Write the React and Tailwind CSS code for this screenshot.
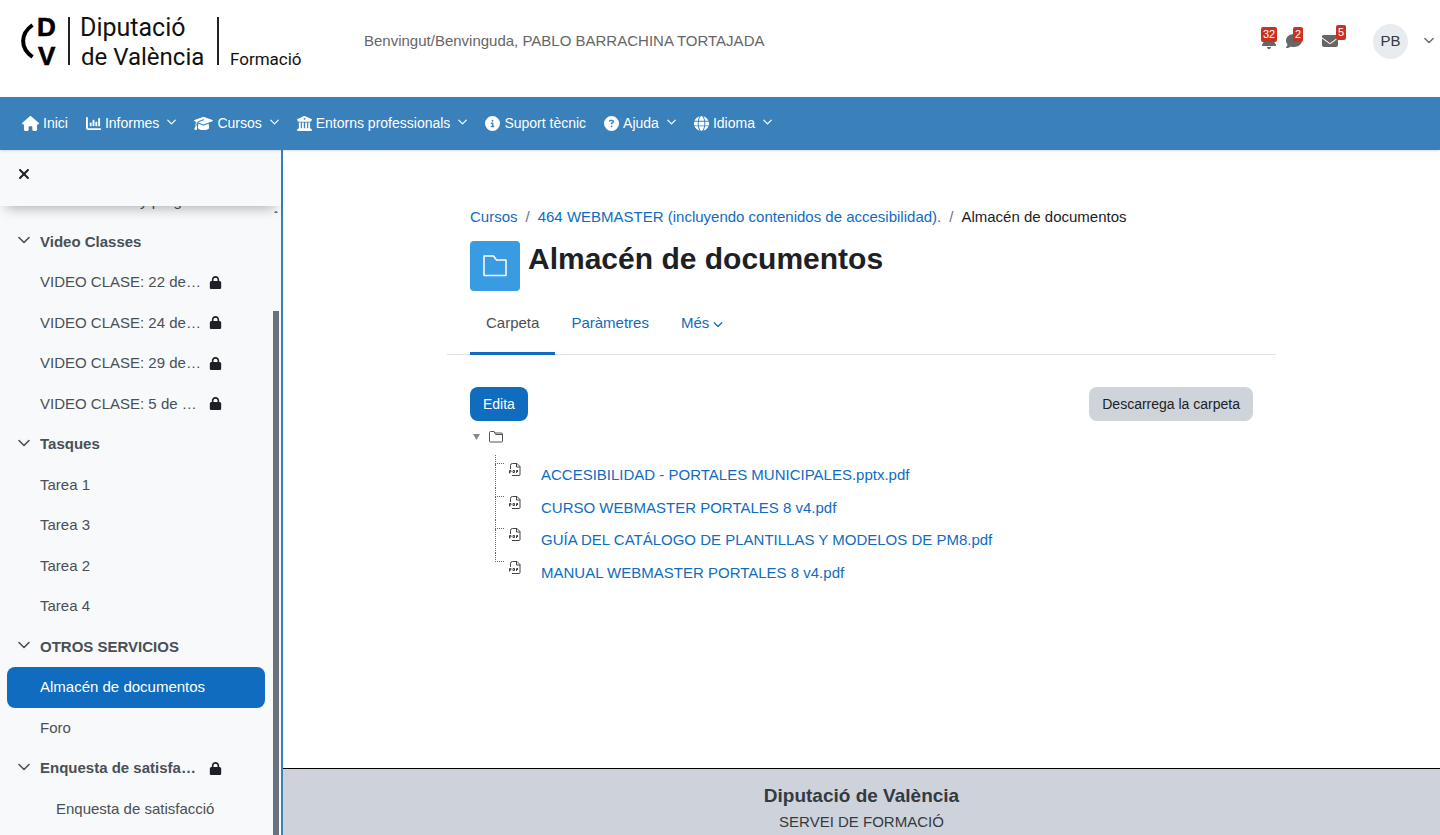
import {
  FaBell,
  FaBuildingColumns,
  FaChartColumn,
  FaChevronDown,
  FaCircleInfo,
  FaCircleQuestion,
  FaComment,
  FaEnvelope,
  FaGlobe,
  FaGraduationCap,
  FaHouse,
  FaLock,
  FaXmark,
} from "react-icons/fa6";

const navItems = [
  { label: "Inici", icon: FaHouse, size: "w-[17px]" },
  { label: "Informes", icon: FaChartColumn, size: "w-[15px]", menu: true },
  { label: "Cursos", icon: FaGraduationCap, size: "w-[19px]", menu: true },
  { label: "Entorns professionals", icon: FaBuildingColumns, size: "w-[15px]", menu: true },
  { label: "Suport tècnic", icon: FaCircleInfo, size: "w-[15px]" },
  { label: "Ajuda", icon: FaCircleQuestion, size: "w-[15px]", menu: true },
  { label: "Idioma", icon: FaGlobe, size: "w-[15px]", menu: true },
];

const courseIndex = [
  { label: "Guía didáctica y programación" },
  { label: "Video Classes", section: true },
  { label: "VIDEO CLASE: 22 de abril", locked: true },
  { label: "VIDEO CLASE: 24 de abril", locked: true },
  { label: "VIDEO CLASE: 29 de abril", locked: true },
  { label: "VIDEO CLASE: 5 de mayo", locked: true },
  { label: "Tasques", section: true },
  { label: "Tarea 1" },
  { label: "Tarea 3" },
  { label: "Tarea 2" },
  { label: "Tarea 4" },
  { label: "OTROS SERVICIOS", section: true },
  { label: "Almacén de documentos", active: true },
  { label: "Foro" },
  { label: "Enquesta de satisfacció", section: true, locked: true },
  { label: "Enquesta de satisfacció", indent: true },
];

const files = [
  "ACCESIBILIDAD - PORTALES MUNICIPALES.pptx.pdf",
  "CURSO WEBMASTER PORTALES 8 v4.pdf",
  "GUÍA DEL CATÁLOGO DE PLANTILLAS Y MODELOS DE PM8.pdf",
  "MANUAL WEBMASTER PORTALES 8 v4.pdf",
];

const Chevron = ({ className }) => (
  <svg viewBox="0 0 12 8" fill="none" stroke="currentColor" strokeWidth="1.6" className={className}>
    <path d="M1 1.500 6 6.500l5-5" strokeLinecap="round" strokeLinejoin="round" />
  </svg>
);

const Logo = () => (
  <svg width="290" height="60" viewBox="0 0 290 60" className="overflow-visible" role="img" aria-label="Diputació de València Formació">
    <path d="M12.500 13C0 22 0 36 12.500 45" fill="none" stroke="#000" strokeWidth="4" />
    <g fontFamily="'Liberation Sans', Arial, sans-serif" fontSize="26" fontWeight="700" stroke="#000" strokeWidth=".6">
      <text x="17" y="24">D</text>
      <text x="18" y="53">V</text>
    </g>
    <g fontFamily="Roboto, Arial, sans-serif" fill="#111">
      <text x="60" y="24" fontSize="25">Diputació</text>
      <text x="61" y="53" fontSize="24">de València</text>
      <text x="210" y="53" fontSize="17">Formació</text>
    </g>
    <path d="M49 5v48M198 5v48" stroke="#222" strokeWidth="2" />
  </svg>
);

const FolderIcon = ({ className }) => (
  <svg viewBox="0 0 24 22" fill="none" stroke="currentColor" strokeWidth="1.500" className={className}>
    <path d="M1 1h9.500l3 4H23v15.500H1z" strokeLinejoin="round" />
  </svg>
);

const SmallFolderIcon = () => (
  <svg width="14" height="12" viewBox="0 0 14 12" fill="none" stroke="#555" strokeWidth="1">
    <path d="M.5 10V1.500a1 1 0 0 1 1-1h3.500l1.500 1.500h6a1 1 0 0 1 1 1V10a1 1 0 0 1-1 1h-11a1 1 0 0 1-1-1z" />
    <path d="M5 .5l1.500 3h7" />
  </svg>
);

const PdfIcon = () => (
  <svg width="12" height="14" viewBox="0 0 12 14" fill="none" stroke="#444" strokeWidth="1">
    <path d="M1.500 6V2.500a2 2 0 0 1 2-2H8l3 3V11.500a1 1 0 0 1-1 1H3" />
    <path d="M7.500.5V4H11" />
    <path d="M.5 10.500V7.500h1.500v1.500H.5M4 7.500v2h1.500v-2zM7.500 10V7.500H9M7.500 8.500H9" />
  </svg>
);

const Header = () => (
  <header className="flex h-[97px] shrink-0 items-start">
    <a href="#" className="ml-5 mt-3 shrink-0">
      <Logo />
    </a>
    <p className="ml-[54px] mt-[30px] flex-1 text-[#666]">
      Benvingut/Benvinguda, PABLO BARRACHINA TORTAJADA
    </p>
    <div className="mt-6 flex h-[35px] items-center text-[#666]">
      <button type="button" aria-label="Notificacions" className="relative mr-[9px] mb-0.5">
        <FaBell className="size-4" />
        <span className="absolute -top-[6px] left-0 rounded-xs bg-[#ca3120] px-0.5 text-[11px] leading-[15px] text-white">32</span>
      </button>
      <button type="button" aria-label="Missatges" className="relative mr-5 mb-0.5">
        <FaComment className="size-4" />
        <span className="absolute -top-[6px] left-[7px] rounded-xs bg-[#ca3120] px-0.5 text-[11px] leading-[15px] text-white">2</span>
      </button>
      <button type="button" aria-label="Correu" className="relative mr-[35px] mb-0.5">
        <FaEnvelope className="size-4" />
        <span className="absolute -top-2 left-[14px] rounded-xs bg-[#ca3120] px-0.5 text-[11px] leading-[15px] text-white">5</span>
      </button>
      <button type="button" className="mr-[6px] flex items-center gap-4 text-[#343a40]">
        <span className="flex size-[35px] items-center justify-center rounded-full bg-[#e9ecef]">PB</span>
        <Chevron className="mb-0.5 h-[7px] w-[10px] text-[#666]" />
      </button>
    </div>
  </header>
);

const NavBar = () => (
  <nav className="relative z-10 flex h-[53px] shrink-0 items-center gap-[18px] bg-[#3a80ba] pl-[22px] text-[14px] text-white shadow-sm">
    {navItems.map(({ label, icon: Icon, size, menu }) => (
      <a key={label} href="#" className="flex items-center whitespace-nowrap">
        <Icon className={`mr-1 h-[15px] ${size}`} />
        {label}
        {menu && <Chevron className="mb-1 ml-2 h-[6px] w-[9px]" />}
      </a>
    ))}
  </nav>
);

const IndexItem = ({ label, section, locked, active, indent }) => (
  <li
    className={`ml-[7px] mr-2 flex items-center rounded-lg py-[9px] ${active ? "bg-[#0f6cbf] text-white" : "text-[#495057]"}`}
  >
    {section ? (
      <button type="button" aria-label={`Replega ${label}`} className="ml-[11px] mr-[10px] mb-[3px]">
        <Chevron className="h-2 w-3" />
      </button>
    ) : (
      <span className={indent ? "w-[49px]" : "w-[33px]"} />
    )}
    <a href="#" className={`truncate ${locked ? "w-[162px]" : "max-w-[180px]"} ${section ? "font-bold" : ""}`}>
      {label}
    </a>
    {locked && <FaLock className="ml-[7px] size-[13px] text-[#1d2125]" />}
  </li>
);

const Sidebar = () => (
  <aside className="flex w-[283px] shrink-0 flex-col border-r-2 border-[#3a80ba] bg-[#f8f9fa]">
    <div className="relative z-[5] h-14 shrink-0 bg-[#f8f9fa] shadow-[0_8px_12px_-6px_rgba(0,0,0,0.3)]">
      <button type="button" aria-label="Tanca l'índex" className="ml-4 mt-4 block">
        <FaXmark className="size-4 text-[#1d2125]" />
      </button>
    </div>
    <div className="flex min-h-0 flex-1">
      <ul className="-mt-[25px] min-w-0 flex-1">
        {courseIndex.map((item, i) => (
          <IndexItem key={i} {...item} />
        ))}
      </ul>
      <div className="mr-0.5 flex w-[6px] flex-col items-center">
        <svg viewBox="0 0 4 2" fill="#6a737b" className="mt-[5px] h-0.5 w-1">
          <path d="M0 2 1.500 0h1L4 2z" />
        </svg>
        <div className="mt-[98px] w-full flex-1 bg-[#6a737b]" />
      </div>
    </div>
  </aside>
);

const FileTree = () => (
  <div>
    <div className="flex h-[34px] items-center gap-[9px] pb-0.5 pl-[3px]">
      <svg width="7" height="6" viewBox="0 0 7 6" fill="#888">
        <path d="M0 0h7L3.500 6z" />
      </svg>
      <SmallFolderIcon />
    </div>
    <ul className="pl-[25px]">
      {files.map((name, i) => (
        <li key={name} className="flex items-start">
          <div className="flex w-[9px] shrink-0 flex-col self-stretch">
            <div className="h-[9px] border-b border-l border-dotted border-[#666]" />
            {i < files.length - 1 && <div className="flex-1 border-l border-dotted border-[#666]" />}
          </div>
          <a href="#" className="flex items-start gap-5 pb-px pl-[5px] text-[#0f6cbf]">
            <span className="pt-2">
              <PdfIcon />
            </span>
            <span className="pt-[9px]">{name}</span>
          </a>
        </li>
      ))}
    </ul>
  </div>
);

const Content = () => (
  <main className="mx-auto min-h-[618px] w-full max-w-[829px] pt-14">
    <div className="px-[23px]">
      <nav aria-label="Ruta">
        <ol className="flex gap-2 text-[#6a737b]">
          <li>
            <a href="#" className="text-[#0f6cbf]">Cursos</a>
          </li>
          <li aria-hidden="true">/</li>
          <li>
            <a href="#" className="text-[#0f6cbf]">464 WEBMASTER (incluyendo contenidos de accesibilidad).</a>
          </li>
          <li aria-hidden="true">/</li>
          <li className="text-[#1d2125]">Almacén de documentos</li>
        </ol>
      </nav>
      <div className="mt-3 flex gap-2">
        <div className="flex size-[50px] items-center justify-center rounded bg-[#399be2] text-white">
          <FolderIcon className="h-[22px] w-6" />
        </div>
        <h1 className="text-[30px] leading-9 font-bold text-[#1d2125]">Almacén de documentos</h1>
      </div>
    </div>
    <nav className="flex border-b border-[#dee2e6] px-[23px]">
      <a href="#" className="-mb-px border-b-3 border-[#0f6cbf] px-4 pt-[21px] pb-[18px] text-[#495057]">Carpeta</a>
      <a href="#" className="px-4 pt-[21px] text-[#0f6cbf]">Paràmetres</a>
      <button type="button" className="flex items-start gap-1 px-4 pt-[21px] text-[#0f6cbf]">
        Més
        <FaChevronDown className="mt-[7px] size-[10px]" />
      </button>
    </nav>
    <div className="px-[23px] pt-8">
      <div className="flex justify-between text-[14px]">
        <button type="button" className="h-[34px] rounded-lg bg-[#0f6cbf] px-[13px] text-white">Edita</button>
        <button type="button" className="h-[34px] rounded-lg bg-[#ced4da] px-[13px] text-[#1d2125]">Descarrega la carpeta</button>
      </div>
      <FileTree />
    </div>
  </main>
);

const App = () => {
  return (
    <div className="flex h-screen flex-col overflow-hidden bg-white font-['Liberation_Sans',Arial,sans-serif] text-[15px] leading-normal">
      <Header />
      <NavBar />
      <div className="flex min-h-0 flex-1">
        <Sidebar />
        <div className="min-w-0 flex-1 overflow-hidden">
          <Content />
          <footer className="border-t border-black bg-[#ced2db] pt-3 pb-6 text-center text-[#343a40]">
            <h2 className="text-[19px] leading-[30px] font-bold">Diputació de València</h2>
            <p>SERVEI DE FORMACIÓ</p>
          </footer>
        </div>
      </div>
    </div>
  );
};
export default App;
